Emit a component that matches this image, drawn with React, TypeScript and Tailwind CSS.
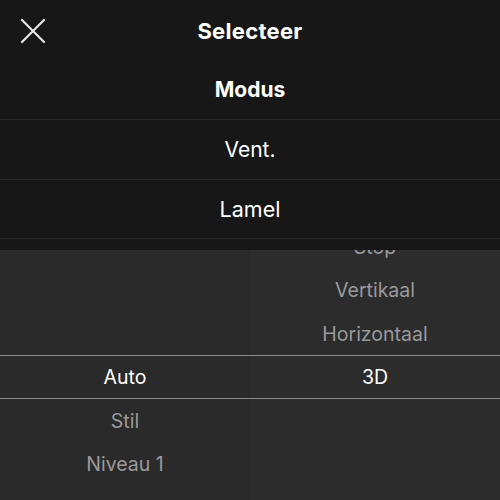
import React from "react";

const leftItems = ["Auto", "Stil", "Niveau 1", "Niveau 2"];
const rightItems = ["Stop", "Vertikaal", "Horizontaal", "3D"];

export default function App() {
  return (
    <div
      className="w-[500px] h-[500px] overflow-hidden bg-[#171717] flex flex-col"
      style={{ fontFamily: "Inter, 'Noto Sans', sans-serif" }}
    >
      <div className="h-[60px] relative flex items-center justify-center pt-[3px]">
        <svg
          className="absolute left-[20px] top-[18px]"
          width="26"
          height="26"
          viewBox="0 0 26 26"
        >
          <path d="M2 2 L24 24 M24 2 L2 24" stroke="#e6e6e6" strokeWidth="2.2" strokeLinecap="round" />
        </svg>
        <span className="text-white text-[22px] font-bold tracking-[0.3px]">Selecteer</span>
      </div>
      <div className="h-[60px] border-b border-[#2a2a2a] flex items-center justify-center pt-[1px]">
        <span className="text-white text-[21px] font-bold">Modus</span>
      </div>
      <div className="h-[60px] border-b border-[#2a2a2a] flex items-center justify-center">
        <span className="text-white text-[21px]">Vent.</span>
      </div>
      <div className="h-[59px] border-b border-[#2a2a2a] flex items-center justify-center">
        <span className="text-white text-[21.5px]">Lamel</span>
      </div>
      <div className="h-[11px]" />
      <div className="relative flex-1 grid grid-cols-2 overflow-hidden">
        <div className="bg-[#2a2a2a] flex flex-col pt-[106px]">
          {leftItems.map((t, i) => (
            <div
              key={t}
              className={
                "h-[43.5px] shrink-0 flex items-center justify-center text-[19.5px] " +
                (i === 0 ? "text-white" : "text-[#9a9a9a]")
              }
            >
              {t}
            </div>
          ))}
        </div>
        <div className="bg-[#2c2c2c] flex flex-col mt-[-24.5px]">
          {rightItems.map((t, i) => (
            <div
              key={t}
              className={
                "h-[43.5px] shrink-0 flex items-center justify-center text-[19.5px] " +
                (i === 3 ? "text-white" : "text-[#9a9a9a]")
              }
            >
              {t}
            </div>
          ))}
        </div>
        <div className="absolute left-0 right-0 top-[105px] h-[44px] border-y border-[#8a8a8a] pointer-events-none" />
      </div>
    </div>
  );
}
